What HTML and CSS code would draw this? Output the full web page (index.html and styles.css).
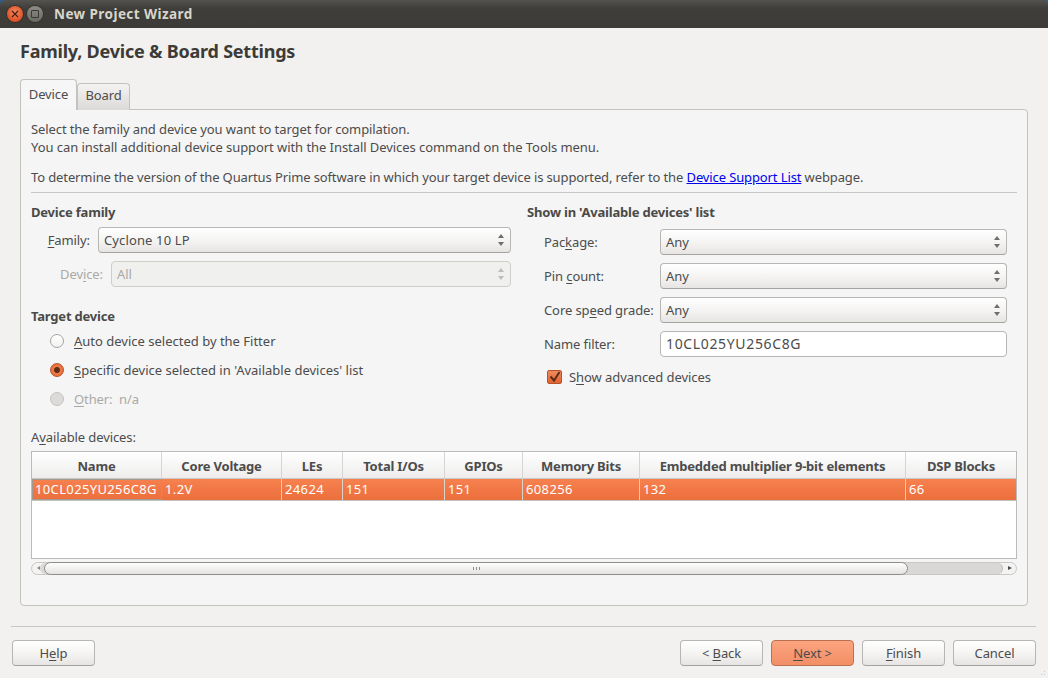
FILE: index.html
```html
<!DOCTYPE html>
<html lang="en">
<head>
<meta charset="utf-8">
<title>New Project Wizard</title>
<link rel="stylesheet" href="styles.css">
</head>
<body>
<div class="window">
  <header class="titlebar">
    <span class="wbtn wbtn-close"><svg width="8" height="8" viewBox="0 0 8 8"><path d="M1 1l6 6M7 1L1 7" stroke="#4a2015" stroke-width="1.3" fill="none"/></svg></span>
    <span class="wbtn wbtn-max"><span class="maxbox"></span></span>
    <span class="wtitle">New Project Wizard</span>
  </header>
  <main class="main">
    <h1 class="heading">Family, Device &amp; Board Settings</h1>
    <div class="tabs">
      <div class="tab tab-active">Device</div>
      <div class="tab">Board</div>
    </div>
    <section class="panel">
      <p class="line">Select the family and device you want to target for compilation.</p>
      <p class="line line-wide">You can install additional device support with the Install Devices command on the Tools menu.</p>
      <p class="line line-gap">To determine the version of the Quartus Prime software in which your target device is supported, refer to the <a class="link" href="#">Device Support List</a> webpage.</p>
      <hr class="rule">
      <div class="columns">
        <div class="col">
          <div class="group-title">Device family</div>
          <div class="form-row row-family">
            <label class="lbl lbl-right"><u>F</u>amily:</label>
            <div class="combo"><span class="combo-value">Cyclone 10 LP</span><span class="spin"></span></div>
          </div>
          <div class="form-row row-device">
            <label class="lbl lbl-right disabled">Dev<u>i</u>ce:</label>
            <div class="combo combo-disabled"><span>All</span><span class="spin"></span></div>
          </div>
          <div class="group-title target-title">Target device</div>
          <div class="radios">
            <div class="radio-row"><span class="radio"></span><span><u>A</u>uto device selected by the Fitter</span></div>
            <div class="radio-row"><span class="radio radio-on"></span><span><u>S</u>pecific device selected in 'Available devices' list</span></div>
            <div class="radio-row disabled"><span class="radio radio-off"></span><span class="radio-other"><u>O</u>ther:&nbsp; n/a</span></div>
          </div>
        </div>
        <div class="col">
          <div class="group-title">Show in 'Available devices' list</div>
          <div class="filters">
            <div class="form-row row-filter"><label class="lbl">Pac<u>k</u>age:</label><div class="combo"><span>Any</span><span class="spin"></span></div></div>
            <div class="form-row row-filter"><label class="lbl">Pin <u>c</u>ount:</label><div class="combo"><span>Any</span><span class="spin"></span></div></div>
            <div class="form-row row-filter"><label class="lbl">Core sp<u>e</u>ed grade:</label><div class="combo"><span>Any</span><span class="spin"></span></div></div>
            <div class="form-row row-filter"><label class="lbl">Name filter:</label><div class="textbox">10CL025YU256C8G</div></div>
          </div>
          <div class="check-row">
            <span class="check"><svg width="15" height="14" viewBox="0 0 15 14"><path d="M3.5 6.5l3.5 4L12.5 2" stroke="#5c2c16" stroke-width="2" fill="none"/></svg></span>
            <span>S<u>h</u>ow advanced devices</span>
          </div>
        </div>
      </div>
      <div class="avail-label">A<u>v</u>ailable devices:</div>
      <div class="table">
        <div class="tr thead">
          <div class="th">Name</div><div class="th">Core Voltage</div><div class="th">LEs</div><div class="th">Total I/Os</div><div class="th">GPIOs</div><div class="th">Memory Bits</div><div class="th">Embedded multiplier 9-bit elements</div><div class="th">DSP Blocks</div>
        </div>
        <div class="tr tsel">
          <div class="td">10CL025YU256C8G</div><div class="td">1.2V</div><div class="td">24624</div><div class="td">151</div><div class="td">151</div><div class="td">608256</div><div class="td">132</div><div class="td">66</div>
        </div>
      </div>
      <div class="hscroll">
        <span class="track"></span>
        <span class="arrow arrow-left"></span>
        <div class="thumb"><span class="grip"></span></div>
        <span class="arrow arrow-right"></span>
      </div>
    </section>
  </main>
  <footer class="footer">
    <hr class="rule footer-rule">
    <div class="buttons">
      <div class="btn"><span>H<u>e</u>lp</span></div>
      <div class="btn-group">
        <div class="btn"><span>&lt; <u>B</u>ack</span></div>
        <div class="btn btn-primary"><span><u>N</u>ext &gt;</span></div>
        <div class="btn"><span><u>F</u>inish</span></div>
        <div class="btn"><span>Cancel</span></div>
      </div>
    </div>
  </footer>
  <span class="resize-grip"></span>
</div>
</body>
</html>
```
FILE: styles.css
```css
* { box-sizing: border-box; }
html, body { margin: 0; padding: 0; }
body {
  width: 1048px;
  height: 678px;
  overflow: hidden;
  background: #2a5f94;
  font-family: "Noto Sans", "Open Sans", sans-serif;
  font-size: 13px;
  line-height: 18px;
  letter-spacing: -0.1px;
  color: #4c4c4c;
}
u { text-underline-offset: 2px; text-decoration-thickness: 1px; }
.window { position: relative; width: 1048px; height: 678px; display: flex; flex-direction: column; }

.titlebar {
  height: 28px;
  flex: none;
  display: flex;
  align-items: center;
  padding-left: 7px;
  border-radius: 5px 5px 0 0;
  background: linear-gradient(#55534e, #3f3e3a 30%, #3c3b37);
}
.wbtn {
  width: 16px; height: 16px; border-radius: 50%;
  display: flex; align-items: center; justify-content: center;
}
.wbtn-close { background: radial-gradient(circle at 50% 40%, #f58a5f, #dc4c22 75%); box-shadow: 0 0 0 1px #33322e; }
.wbtn-max { margin-left: 4px; background: linear-gradient(#8e8c87, #6a6863); box-shadow: 0 0 0 1px #33322e; }
.maxbox { width: 8px; height: 8px; border: 1px solid #3a3935; border-radius: 1px; }
.wtitle {
  margin-left: 11px; font-weight: 700; font-size: 13.5px; color: #d8d5cb; letter-spacing: 0.43px;
}

.main { flex: none; padding: 0 20px; background: #f2f1f0; }
.heading {
  margin: 0; padding-top: 11px; height: 36px;
  font-size: 18px; line-height: 24px; font-weight: 700; color: #3c3b37; letter-spacing: -0.22px;
}
.tabs { display: flex; align-items: flex-end; height: 31px; margin-top: 15px; margin-bottom: -1px; position: relative; z-index: 1; }
.tab {
  width: 53px; height: 27px; text-align: center; line-height: 23px;
  border: 1px solid #c4c2bf; border-bottom: 0; border-radius: 4px 4px 0 0;
  background: linear-gradient(#f4f3f2, #dcdad8);
}
.tab-active { width: 57px; height: 31px; line-height: 28px; background: #f6f6f6; }

.panel {
  height: 497px;
  padding: 10px 10px 0;
  background: #f5f5f5;
  border: 1px solid #c4c2bf;
  border-radius: 0 4px 4px 4px;
}
.line { margin: 0; height: 18px; white-space: nowrap; }
.line-wide { letter-spacing: -0.065px; }
.line-gap { margin-top: 12px; letter-spacing: -0.115px; }
.link { color: #0000ee; text-decoration: underline; }
.rule { margin: 6px 0 0; border: 0; height: 1px; background: #c9c7c4; }

.columns { display: grid; grid-template-columns: 480px 480px; column-gap: 16px; margin-top: 10px; }
.group-title { font-weight: 700; height: 18px; color: #4a4a48; letter-spacing: -0.2px; }
.form-row { display: grid; align-items: center; column-gap: 8px; height: 26px; }
.row-family { grid-template-columns: 59px 1fr; margin-top: 6px; }
.row-device { grid-template-columns: 72px 1fr; margin-top: 8px; }
.row-filter { grid-template-columns: 125px 1fr; }
.lbl { white-space: nowrap; }
.lbl-right { text-align: right; }
.row-filter .lbl { padding-left: 17px; }
.disabled { color: #aaa9a6; }

.combo {
  height: 26px; display: flex; align-items: center; justify-content: space-between;
  padding: 0 6px 0 5px;
  border: 1px solid #b8b6b2; border-bottom-color: #a5a3a0; border-radius: 4px;
  background: linear-gradient(#ffffff, #f4f3f2 55%, #e6e5e3);
}
.combo-value { letter-spacing: 0.13px; }
.combo-disabled { background: #f0f0ef; color: #aaa9a6; border-color: #d0cecb; }
.spin { position: relative; width: 6px; height: 12px; }
.spin::before, .spin::after {
  content: ""; position: absolute; left: 0;
  border-left: 3px solid transparent; border-right: 3px solid transparent;
}
.spin::before { top: 0; border-bottom: 4px solid #6e6e6c; }
.spin::after { bottom: 0; border-top: 4px solid #6e6e6c; }
.combo-disabled .spin::before { border-bottom-color: #bdbcb9; }
.combo-disabled .spin::after { border-top-color: #bdbcb9; }

.target-title { margin-top: 20px; }
.radios { display: grid; row-gap: 11px; margin-top: 7px; padding-left: 19px; letter-spacing: 0; }
.radio-other { letter-spacing: -0.1px; }
.radio-row { display: flex; align-items: center; column-gap: 10px; height: 18px; }
.radio {
  width: 14px; height: 14px; border-radius: 50%;
  border: 1px solid #a6a4a0; background: linear-gradient(#ffffff, #f2f1f0);
}
.radio-on { border-color: #b5532b; background: radial-gradient(circle, #5c2c16 0 2.5px, #ee7a48 3.5px, #e2622f 100%); }
.radio-off { background: #dcdbd9; border-color: #c6c4c1; }

.filters { display: grid; row-gap: 8px; margin-top: 8px; }
.textbox {
  height: 26px; line-height: 24px; padding: 0 5px; font-size: 14px; letter-spacing: 0.65px;
  background: #fff; border: 1px solid #b8b6b2; border-radius: 4px;
}
.check-row { display: flex; align-items: center; column-gap: 7px; height: 18px; margin-top: 11px; padding-left: 20px; letter-spacing: -0.07px; }
.check {
  width: 15px; height: 14px; border-radius: 2px;
  border: 1px solid #b5532b; background: linear-gradient(#f08a5d, #e2622f); display: block; overflow: hidden;
}
.check svg { display: block; margin: -1px 0 0 -1px; }

.avail-label { margin-top: 20px; height: 18px; }
.table {
  height: 108px; margin-top: 5px;
  border: 1px solid #bdbbb8; background: #fff;
}
.tr { display: grid; grid-template-columns: 130px 120px 61px 102px 78px 117px 266px 1fr; }
.thead { height: 27px; }
.th {
  height: 27px; line-height: 28px; text-align: center; font-weight: 700; white-space: nowrap; letter-spacing: -0.2px;
  background: linear-gradient(#ffffff, #eeedec);
  border-right: 1px solid #d6d5d3; border-bottom: 1px solid #c9c8c6;
}
.th:last-child { border-right: 0; }
.tsel { height: 22px; border-bottom: 1px solid #c4c3c1; background: linear-gradient(#f6814f, #ec6f3c); }
.td {
  height: 21px; line-height: 21px; padding-left: 3px; color: #fff; white-space: nowrap; letter-spacing: 0.36px;
  border-right: 1px solid #d8d4cc;
}
.td:first-child { padding-left: 2px; border: 1px solid #a09a90; line-height: 19px; }
.td:last-child { border-right: 0; }

.hscroll {
  position: relative; height: 13px; margin-top: 3px;
  border-radius: 7px; background: #f4f3f2; border: 1px solid #c9c7c4;
}
.track { position: absolute; left: 8px; right: 13px; top: 0; bottom: 0; background: #d9d8d6; border-radius: 6px; border-right: 1px solid #bdbbb8; }
.thumb {
  position: absolute; left: 12px; top: -1px; width: 864px; height: 13px;
  background: linear-gradient(#ffffff, #f1f0ef 50%, #e4e3e1);
  border: 1px solid #8f8d89; border-radius: 7px;
  display: flex; align-items: center; justify-content: center;
}
.grip { width: 7px; height: 3px; background: repeating-linear-gradient(90deg, #8f8d89 0 1px, transparent 1px 3px); }
.arrow { position: absolute; top: 3px; width: 0; height: 0; border-top: 2.5px solid transparent; border-bottom: 2.5px solid transparent; }
.arrow-left { left: 5px; border-right: 3px solid #8a8886; }
.arrow-right { right: 4px; border-left: 4px solid #4c4c4c; }

.footer { flex: 1; padding: 20px 12px 0 11px; background: #f2f1f0; }
.footer-rule { margin: 0; }
.buttons { display: flex; justify-content: space-between; margin-top: 13px; padding-left: 1px; }
.btn-group { display: flex; column-gap: 8px; }
.btn {
  width: 83px; height: 26px; line-height: 24px; text-align: center;
  border: 1px solid #b8b6b2; border-bottom-color: #a5a3a0; border-radius: 4px;
  background: linear-gradient(#ffffff, #f4f3f2 55%, #e6e5e3);
}
.btn-primary { background: linear-gradient(#fba47f, #f28f66); border-color: #bd6f52; }
.resize-grip {
  position: absolute; right: 1px; bottom: 1px; width: 10px; height: 10px;
  background: radial-gradient(circle, #c9c7c4 0.7px, transparent 1px) 0 0 / 3px 3px;
  clip-path: polygon(100% 0, 100% 100%, 0 100%);
}
```
